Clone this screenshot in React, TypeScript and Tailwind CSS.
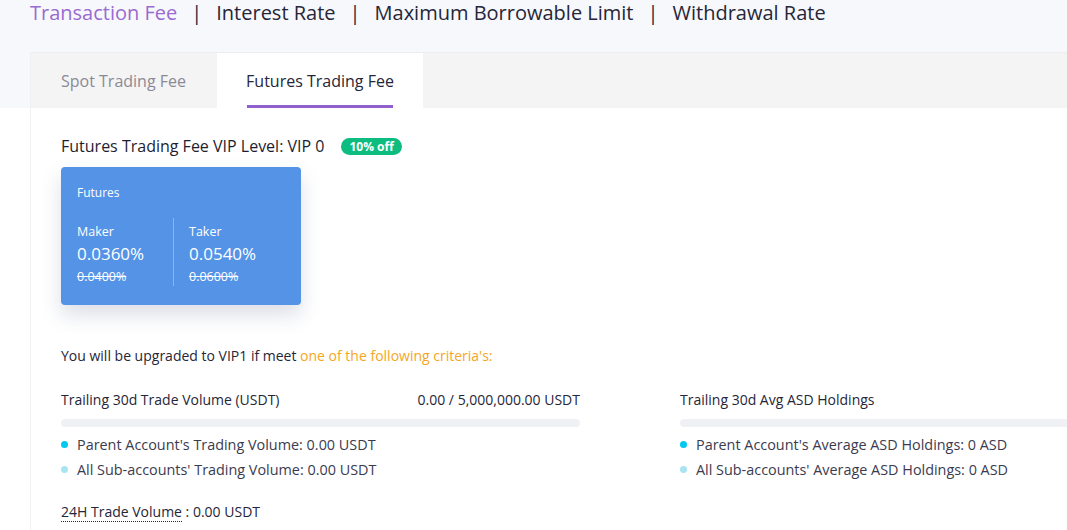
import React from "react";

const navItems = ["Transaction Fee", "Interest Rate", "Maximum Borrowable Limit", "Withdrawal Rate"];

const Bullet = ({ color, text }: { color: string; text: string }) => (
  <div className="flex items-center h-[25px]">
    <span className={`w-[7px] h-[7px] rounded-full ${color} mr-[9px]`} />
    <span className="text-[14.4px] text-[#3b3b4f]">{text}</span>
  </div>
);

export default function App() {
  return (
    <div className="w-[1067px] h-[530px] overflow-hidden bg-white relative" style={{ fontFamily: "'Open Sans', 'Noto Sans', sans-serif" }}>
      {/* header band */}
      <div className="bg-[#f7f8fc] h-[108px] pl-[30px]">
        <div className="flex items-center h-[26px] leading-[26px] text-[20px] text-[#262638]">
          {navItems.map((n, i) => (
            <React.Fragment key={n}>
              {i > 0 && <span className="mx-[14px] text-[#262638]">|</span>}
              <span className={i === 0 ? "text-[#9a6bd0]" : ""}>{n}</span>
            </React.Fragment>
          ))}
        </div>
      </div>

      {/* card */}
      <div className="absolute left-[30px] top-[52px] right-[-20px] bottom-0 border-l border-[#f0f0f2]">
        <div className="flex h-[56px] bg-[#f4f4f5] border-t border-[#eeeef0]">
          <div className="w-[186px] flex items-center pl-[30px] text-[16px] text-[#8a8a95]">Spot Trading Fee</div>
          <div className="w-[206px] bg-white flex flex-col items-center justify-center relative">
            <span className="text-[16px] text-[#262638]">Futures Trading Fee</span>
            <span className="absolute bottom-0 left-[30px] right-[30px] h-[3px] bg-[#9160cc]" />
          </div>
        </div>

        <div className="bg-white pl-[30px] pt-[28px]">
          <div className="flex items-center h-[20px]">
            <span className="text-[16px] text-[#1e1e30]">Futures Trading Fee VIP Level: VIP 0</span>
            <span className="ml-[17px] px-[8px] h-[17px] leading-[17px] rounded-full bg-[#0dbd80] text-white text-[12px] font-bold">10% off</span>
          </div>

          <div className="mt-[11px] w-[240px] h-[138px] rounded-[4px] bg-[#5493e6] text-white pl-[16px] pt-[17px] shadow-[0_10px_20px_rgba(60,80,120,0.18)]">
            <div className="text-[12px]">Futures</div>
            <div className="flex mt-[16px]">
              <div className="w-[97px] border-r border-[#8ab4ee] pt-[7px] h-[68px]">
                <div className="text-[12.5px] leading-[14px]">Maker</div>
                <div className="text-[17px] leading-[20px] mt-[5px]">0.0360%</div>
                <div className="text-[12.5px] leading-[14px] mt-[6px] line-through">0.0400%</div>
              </div>
              <div className="pl-[15px] pt-[7px]">
                <div className="text-[12.5px] leading-[14px]">Taker</div>
                <div className="text-[17px] leading-[20px] mt-[5px]">0.0540%</div>
                <div className="text-[12.5px] leading-[14px] mt-[6px] line-through">0.0600%</div>
              </div>
            </div>
          </div>

          <div className="mt-[43px] text-[14px] text-[#262638] h-[16px] leading-[16px]">
            You will be upgraded to VIP1 if meet <span className="text-[#f5a623]">one of the following criteria's:</span>
          </div>

          <div className="flex mt-[28px] gap-[100px]">
            <div className="w-[519px]">
              <div className="flex justify-between text-[14px] text-[#262638] h-[16px] leading-[16px]">
                <span>Trailing 30d Trade Volume (USDT)</span>
                <span>0.00 / 5,000,000.00 USDT</span>
              </div>
              <div className="mt-[11px] h-[8px] rounded-full bg-[#f0f1f5]" />
              <div className="mt-[5px]">
                <Bullet color="bg-[#00c8f0]" text="Parent Account's Trading Volume: 0.00 USDT" />
                <Bullet color="bg-[#a8e4f2]" text="All Sub-accounts' Trading Volume: 0.00 USDT" />
              </div>
            </div>
            <div className="flex-1">
              <div className="text-[14px] text-[#262638] h-[16px] leading-[16px]">Trailing 30d Avg ASD Holdings</div>
              <div className="mt-[11px] h-[8px] rounded-l-full bg-[#f0f1f5]" />
              <div className="mt-[5px]">
                <Bullet color="bg-[#00c8f0]" text="Parent Account's Average ASD Holdings: 0 ASD" />
                <Bullet color="bg-[#a8e4f2]" text="All Sub-accounts' Average ASD Holdings: 0 ASD" />
              </div>
            </div>
          </div>

          <div className="mt-[22px] text-[14px] text-[#262638] leading-[16px]">
            <span className="border-b border-dotted border-[#262638]">24H Trade Volume</span> : 0.00 USDT
          </div>
        </div>
      </div>
    </div>
  );
}
